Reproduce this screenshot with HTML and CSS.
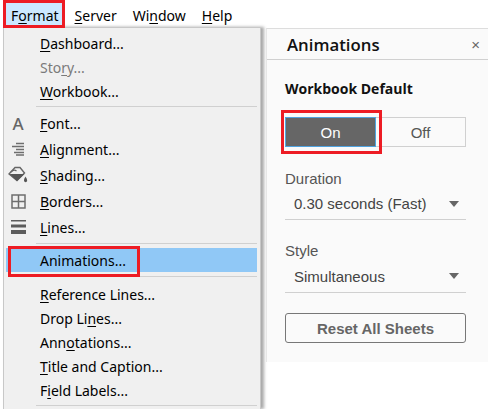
FILE: index.html
```html
<!DOCTYPE html>
<html lang="en">
<head>
  <meta charset="UTF-8" />
  <meta name="viewport" content="width=device-width, initial-scale=1.0"/>
  <title>Format menu and Animations pane</title>
  <link rel="stylesheet" href="styles.css">
</head>
<body>
  <div class="menubar">
    <span class="bar-item open marked"><span>F<u>o</u>rmat</span></span>
    <span class="bar-item"><span><u>S</u>erver</span></span>
    <span class="bar-item"><span>Wi<u>n</u>dow</span></span>
    <span class="bar-item"><span><u>H</u>elp</span></span>
  </div>

  <div class="workspace">
    <div class="menu">
      <div class="row"><span class="label"><u>D</u>ashboard...</span></div>
      <div class="row disabled"><span class="label">Sto<u>r</u>y...</span></div>
      <div class="row"><span class="label"><u>W</u>orkbook...</span></div>
      <div class="sep"></div>
      <div class="row tall">
        <span class="icon font-icon">A</span>
        <span class="label"><u>F</u>ont...</span>
      </div>
      <div class="row tall">
        <span class="icon">
          <svg width="12" height="14" viewBox="3 0 12 14">
            <path d="M7 1.5h8M3 4.5h12M7 7.5h8M5 10.5h10M7 13h8" stroke="#6e6e6e" stroke-width="1.4" fill="none"/>
          </svg>
        </span>
        <span class="label"><u>A</u>lignment...</span>
      </div>
      <div class="row tall">
        <span class="icon">
          <svg width="20" height="18" viewBox="0 0 20 18">
            <path d="M1 8 L7 1.5 L12 1.5 L16.5 7 L9 14.5 Z" fill="#f0f0f0" stroke="#666" stroke-width="1.4"/>
            <path d="M1.5 8 H16.5 L9 15 Z" fill="#555"/>
            <path d="M3 6 Q6 3 8.5 5" stroke="#666" stroke-width="1.2" fill="none"/>
            <path d="M17.5 10.5 Q15.5 13.5 16 15 A1.7 1.7 0 0 0 19.2 15 Q19.5 13.5 17.5 10.5 Z" fill="#555"/>
          </svg>
        </span>
        <span class="label"><u>S</u>hading...</span>
      </div>
      <div class="row tall">
        <span class="icon">
          <svg width="15" height="15" viewBox="0 0 15 15">
            <path d="M1 1h13v13H1z M7.5 1v13 M1 7.5h13" stroke="#6e6e6e" stroke-width="1.5" fill="none"/>
          </svg>
        </span>
        <span class="label"><u>B</u>orders...</span>
      </div>
      <div class="row tall">
        <span class="icon">
          <svg width="15" height="14" viewBox="0 0 15 14">
            <path d="M0 0h15v1.5H0z M0 4.5h15v3H0z M0 10h15v4H0z" fill="#5c5c5c"/>
          </svg>
        </span>
        <span class="label"><u>L</u>ines...</span>
      </div>
      <div class="sep"></div>
      <div class="row active marked"><span class="label">Animations...</span></div>
      <div class="sep"></div>
      <div class="row"><span class="label"><u>R</u>eference Lines...</span></div>
      <div class="row"><span class="label">Drop Li<u>n</u>es...</span></div>
      <div class="row"><span class="label">Ann<u>o</u>tations...</span></div>
      <div class="row"><span class="label"><u>T</u>itle and Caption...</span></div>
      <div class="row"><span class="label">F<u>i</u>eld Labels...</span></div>
      <div class="sep"></div>
    </div>

    <div class="pane">
      <div class="pane-head">
        <span class="pane-title">Animations</span>
        <span class="pane-close">×</span>
      </div>
      <div class="pane-body">
        <div class="group-title">Workbook Default</div>
        <div class="toggle">
          <span class="toggle-on marked">On</span>
          <span class="toggle-off">Off</span>
        </div>
        <div class="field-label">Duration</div>
        <div class="dropdown">
          <span>0.30 seconds (Fast)</span>
          <span class="caret"></span>
        </div>
        <div class="field-label style-label">Style</div>
        <div class="dropdown style-dropdown">
          <span>Simultaneous</span>
          <span class="caret"></span>
        </div>
        <div class="reset-btn">Reset All Sheets</div>
      </div>
    </div>
  </div>
</body>
</html>
```

FILE: styles.css
```css
:root {
  --menu-bg: #f0f0f0;
  --pane-bg: #fafafa;
  --line: #d0d0d0;
  --mark: #ed1c24;
}

*, *::after {
  box-sizing: border-box;
}

html, body {
  height: 100%;
}

body {
  margin: 0;
  background-color: #fff;
  color: #000;
  font-family: "Noto Sans", sans-serif;
  font-size: 14px;
  overflow: hidden;
}

u {
  text-underline-offset: 2px;
  text-decoration-thickness: 1px;
}

.menubar {
  display: flex;
  height: 27px;
  padding-left: 6px;
}

.bar-item {
  display: flex;
  align-items: center;
  padding: 3px 5px 0;
  margin-right: 6px;
  white-space: nowrap;
}

.bar-item.open {
  background-color: #cce8ff;
}

.marked {
  position: relative;
}

.marked::after {
  content: "";
  position: absolute;
  border: 3px solid var(--mark);
  pointer-events: none;
}

.bar-item.marked::after {
  left: -3px;
  top: 0;
  width: 62px;
  height: 28px;
}

.workspace {
  display: flex;
  align-items: flex-start;
  padding-left: 3px;
}

.menu {
  width: 258px;
  height: 382px;
  flex-shrink: 0;
  padding: 3px 3px 0 2px;
  background-color: var(--menu-bg);
  border: 1px solid #c8c8c8;
  border-bottom: 0;
  box-shadow: 3px 0 3px #a8a8a8;
}

.row {
  display: flex;
  align-items: center;
  height: 24px;
  padding-left: 34px;
  position: relative;
  white-space: nowrap;
}

.row.tall {
  height: 26px;
}

.row.disabled {
  color: #7a7a7a;
}

.row.active {
  background-color: #90c8f6;
}

.row.active::after {
  left: 2px;
  top: -2px;
  width: 132px;
  height: 31px;
}

.icon {
  position: absolute;
  left: 0;
  top: 0;
  width: 24px;
  height: 100%;
  display: flex;
  align-items: center;
  justify-content: center;
}

.font-icon {
  color: #666;
  font-weight: 500;
  font-size: 17px;
}

.sep {
  height: 1px;
  margin: 3px 0 3px 30px;
  background-color: var(--line);
}

.sep:has(+ .active) {
  margin-bottom: 4px;
}

.active + .sep {
  margin-top: 4px;
  margin-bottom: 5px;
}

.pane {
  width: 222px;
  height: 334px;
  margin: 1px 0 0 5px;
  background-color: var(--pane-bg);
  border-top: 1px solid #ddd;
  border-left: 1px solid #e6e6e6;
  font-family: "Liberation Sans", sans-serif;
  font-size: 15px;
  color: #555;
}

.pane-head {
  display: flex;
  align-items: center;
  justify-content: space-between;
  height: 31px;
  padding: 0 8px 0 20px;
  border-bottom: 1px solid var(--line);
}

.pane-title {
  font-family: "Open Sans", sans-serif;
  font-weight: 600;
  font-size: 16.8px;
  color: #111;
}

.pane-close {
  font-size: 15px;
  color: #666;
}

.pane-body {
  padding: 19px 22px 0 18px;
}

.group-title {
  font-family: "Open Sans", sans-serif;
  font-weight: 700;
  font-size: 14px;
  line-height: 19px;
  color: #111;
}

.toggle {
  display: flex;
  height: 30px;
  margin-top: 19px;
}

.toggle-on {
  width: 91px;
  display: flex;
  align-items: center;
  justify-content: center;
  background-color: #666;
  color: #fff;
  border: 1px solid #4fa3e0;
}

.toggle-on::after {
  left: -5px;
  top: -8px;
  width: 101px;
  height: 44px;
}

.toggle-off {
  flex: 1;
  display: flex;
  align-items: center;
  justify-content: center;
  border: 1px solid var(--line);
  border-left: 0;
}

.field-label {
  margin-top: 23px;
  line-height: 18px;
}

.style-label {
  margin-top: 22px;
}

.dropdown {
  display: flex;
  align-items: center;
  justify-content: space-between;
  height: 32px;
  padding: 0 7px 0 9px;
  border-bottom: 1px solid var(--line);
  color: #444;
}

.style-dropdown {
  height: 33px;
}

.caret {
  width: 0;
  height: 0;
  border-left: 5px solid transparent;
  border-right: 5px solid transparent;
  border-top: 6px solid #666;
}

.reset-btn {
  display: flex;
  align-items: center;
  justify-content: center;
  height: 30px;
  margin-top: 20px;
  border: 1px solid #777;
  border-radius: 3px;
  font-weight: 700;
  color: #666;
}
```
